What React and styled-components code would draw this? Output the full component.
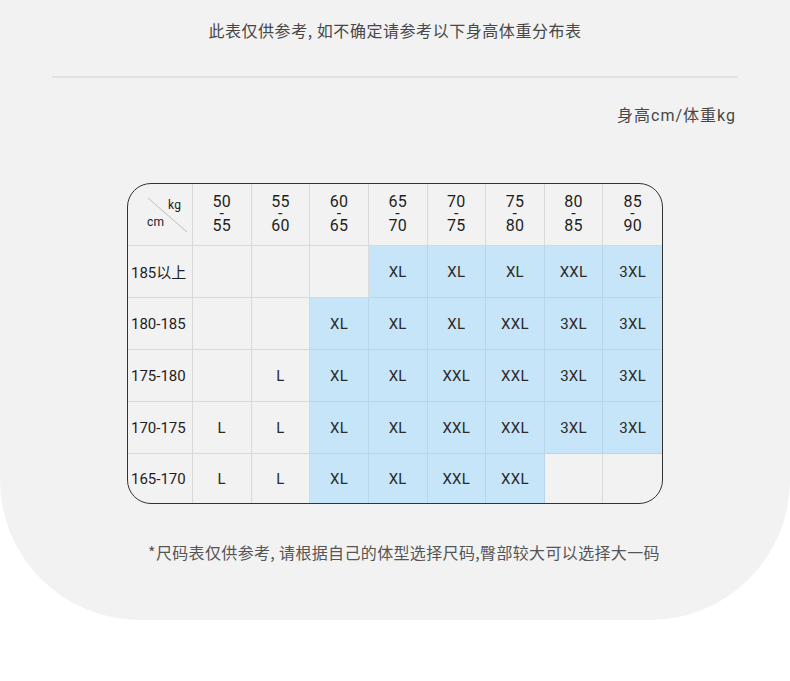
import React from 'react';
import styled, { createGlobalStyle } from 'styled-components';

const GlobalStyle = createGlobalStyle`
  html, body {
    margin: 0;
    padding: 0;
    background: #ffffff;
  }
  body {
    font-family: Roboto, "Noto Sans CJK SC", sans-serif;
  }
`;

const Panel = styled.div`
  width: 790px;
  height: 620px;
  background: #f2f2f2;
  border-radius: 0 0 140px 140px;
  display: flex;
  flex-direction: column;
  align-items: center;
  box-sizing: border-box;
  padding-top: 20px;
`;

const Title = styled.div`
  font-family: "Noto Sans CJK SC", sans-serif;
  font-size: 16px;
  line-height: 20px;
  letter-spacing: 0.55px;
  color: #474747;
`;

const Divider = styled.div`
  align-self: stretch;
  height: 2px;
  background: #e2e2e2;
  margin: 36px 52px 0;
`;

const UnitLabel = styled.div`
  align-self: stretch;
  text-align: right;
  font-family: Roboto, "Noto Sans CJK SC", sans-serif;
  font-size: 16px;
  line-height: 20px;
  letter-spacing: 1px;
  color: #474747;
  padding-right: 54px;
  margin-top: 28px;
`;

const Table = styled.div`
  margin-top: 57px;
  width: 536px;
  box-sizing: border-box;
  border: 1px solid #333;
  border-radius: 24px;
  overflow: hidden;
  display: grid;
  grid-template-columns: 65px repeat(8, 1fr);
  grid-template-rows: 62px repeat(4, 52px) 49px;
  background: #f2f2f2;
`;

const Cell = styled.div`
  box-sizing: border-box;
  display: flex;
  align-items: center;
  justify-content: center;
  border-right: ${p => (p.$lastCol ? 'none' : `1px solid ${p.$blue ? '#b9d6e8' : '#d9d9d9'}`)};
  border-bottom: ${p => (p.$lastRow ? 'none' : `1px solid ${p.$blue ? '#b9d6e8' : '#d9d9d9'}`)};
  background: ${p => (p.$blue ? '#c7e5f8' : 'transparent')};
  font-size: 15px;
  color: #2a2a2a;
  letter-spacing: 0.3px;
`;

const RowHead = styled(Cell)`
  justify-content: flex-start;
  padding-left: 3px;
  font-family: Roboto, "Noto Sans CJK SC", sans-serif;
  font-size: 15px;
  color: #1e1e1e;
  letter-spacing: 0;
`;

const CornerCell = styled(Cell)`
  position: relative;
`;

const Diagonal = styled.svg`
  position: absolute;
  left: 0;
  top: 0;
`;

const CornerText = styled.span`
  position: absolute;
  font-size: 12px;
  line-height: 14px;
  color: #222;
  left: ${p => p.$x}px;
  top: ${p => p.$y}px;
`;

const Range = styled.div`
  white-space: pre-line;
  text-align: center;
  font-size: 16px;
  line-height: 12px;
  color: #1e1e1e;
  letter-spacing: 0.2px;
  padding-bottom: 2px;
`;

const Footer = styled.div`
  margin-top: 38px;
  margin-left: 18px;
  font-family: "Noto Sans CJK SC", sans-serif;
  font-size: 16px;
  line-height: 20px;
  letter-spacing: 0.35px;
  color: #555;
`;

const weights = [
  ['50', '55'], ['55', '60'], ['60', '65'], ['65', '70'],
  ['70', '75'], ['75', '80'], ['80', '85'], ['85', '90'],
];

const rows = [
  ['185以上', ['', '', '', 'XL', 'XL', 'XL', 'XXL', '3XL']],
  ['180-185', ['', '', 'XL', 'XL', 'XL', 'XXL', '3XL', '3XL']],
  ['175-180', ['', 'L', 'XL', 'XL', 'XXL', 'XXL', '3XL', '3XL']],
  ['170-175', ['L', 'L', 'XL', 'XL', 'XXL', 'XXL', '3XL', '3XL']],
  ['165-170', ['L', 'L', 'XL', 'XL', 'XXL', 'XXL', '', '']],
];

const isBlue = v => v.includes('XL');

const App = () => {
  return (
    <>
      <GlobalStyle />
      <Panel>
        <Title>此表仅供参考, 如不确定请参考以下身高体重分布表</Title>
        <Divider />
        <UnitLabel>身高cm/体重kg</UnitLabel>
        <Table>
          <CornerCell>
            <Diagonal width="65" height="61">
              <line x1="20" y1="14" x2="59" y2="48" stroke="#bdbdbd" strokeWidth="1" />
            </Diagonal>
            <CornerText $x={40} $y={14}>kg</CornerText>
            <CornerText $x={19} $y={31}>cm</CornerText>
          </CornerCell>
          {weights.map(([a, b], i) => (
            <Cell key={a} $lastCol={i === weights.length - 1}>
              <Range>{`${a}\n-\n${b}`}</Range>
            </Cell>
          ))}
          {rows.map(([label, sizes], r) => (
            <React.Fragment key={label}>
              <RowHead $lastRow={r === rows.length - 1}>{label}</RowHead>
              {sizes.map((s, c) => (
                <Cell
                  key={c}
                  $blue={isBlue(s)}
                  $lastCol={c === sizes.length - 1}
                  $lastRow={r === rows.length - 1}
                >
                  {s}
                </Cell>
              ))}
            </React.Fragment>
          ))}
        </Table>
        <Footer>*尺码表仅供参考, 请根据自己的体型选择尺码,臀部较大可以选择大一码</Footer>
      </Panel>
    </>
  );
};

export default App;
